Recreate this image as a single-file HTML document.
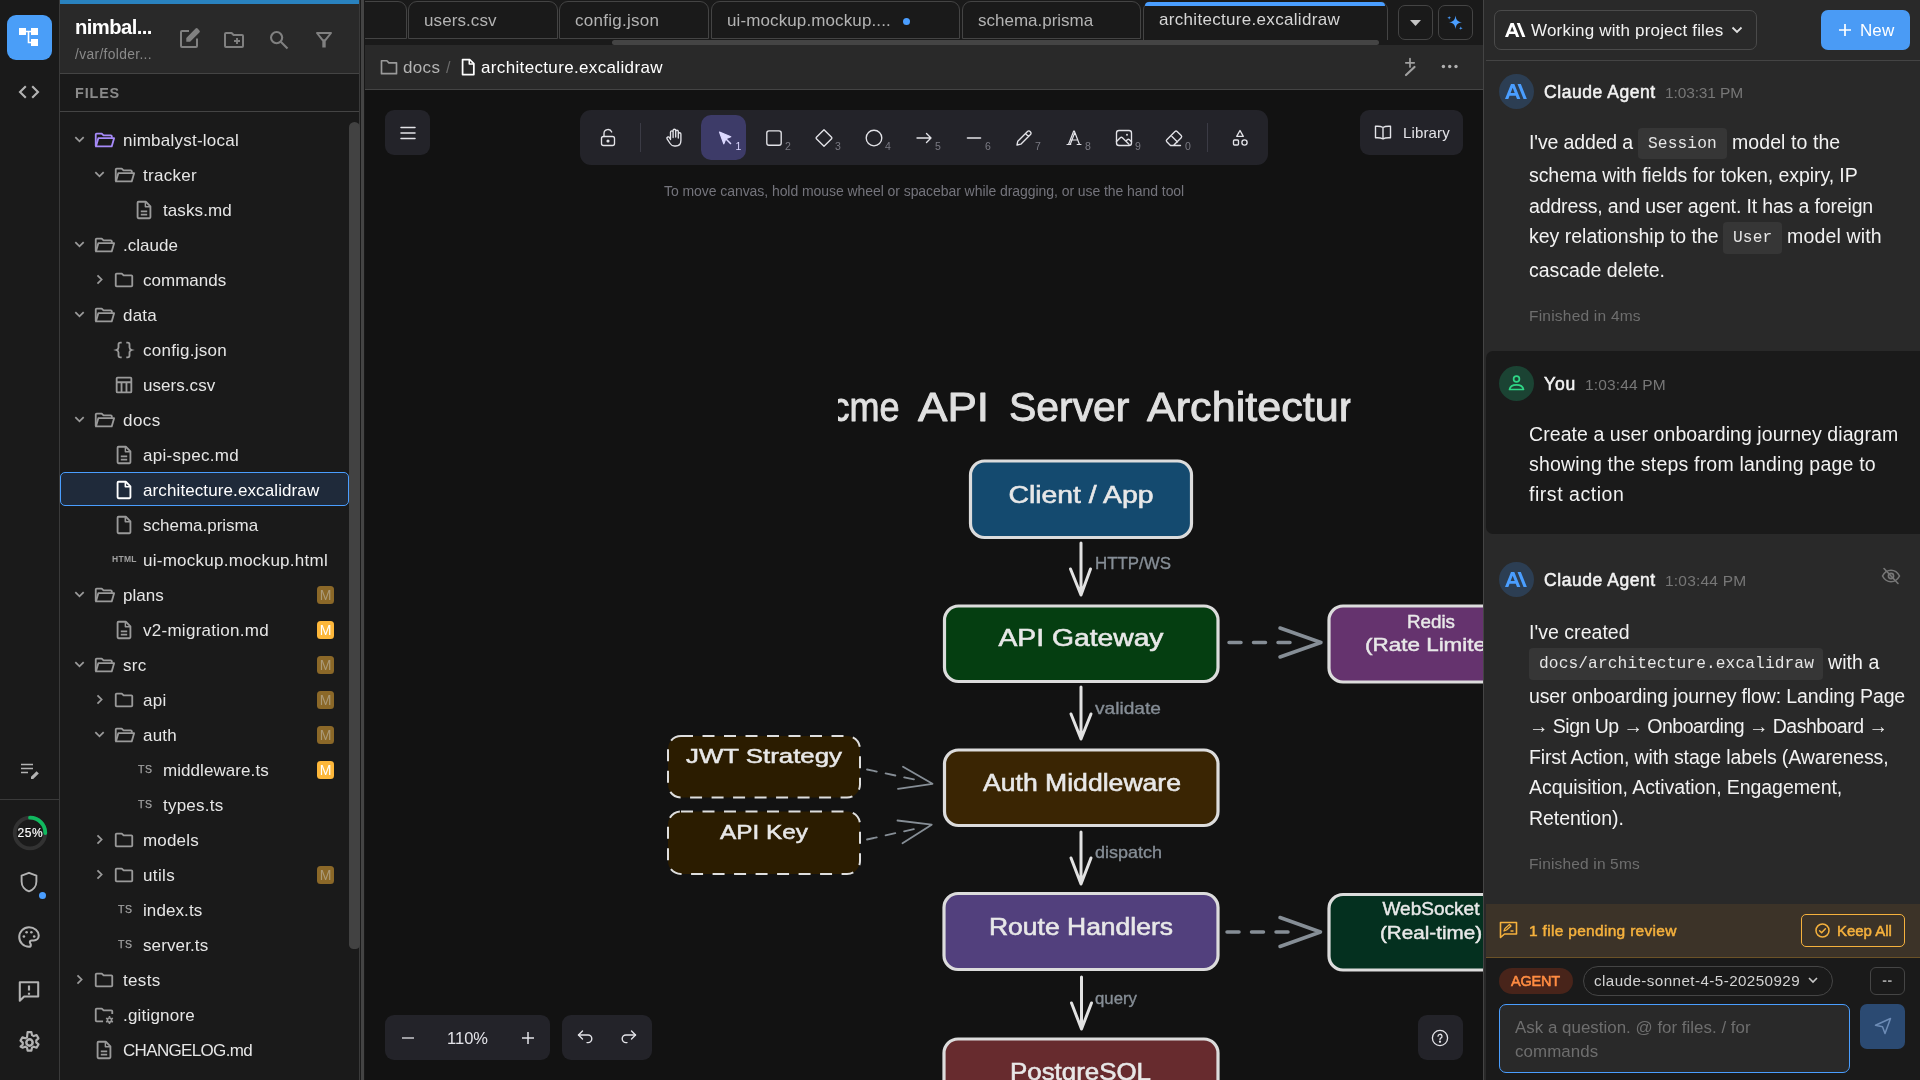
<!DOCTYPE html>
<html lang="en">
<head>
<meta charset="utf-8">
<title>architecture.excalidraw - Nimbalyst</title>
<style>
*{box-sizing:border-box;margin:0;padding:0}
html,body{width:1920px;height:1080px;overflow:hidden;background:#1a1a1a;color:#fff;
  font-family:"Liberation Sans","Noto Sans CJK SC",sans-serif;-webkit-font-smoothing:antialiased}
.abs{position:absolute}
#rail,#side,#ed,#rp{will-change:transform}
svg{display:block;overflow:visible}
.t{position:absolute;white-space:nowrap;line-height:1}
/* rail */
#rail{position:absolute;left:0;top:0;width:60px;height:1080px;background:#1a1a1a;border-right:1px solid #3a3a3a}
#logo{position:absolute;left:7px;top:15px;width:45px;height:45px;border-radius:9px;background:#4a9ef8}
.ri{position:absolute;left:17px;width:24px;height:24px;color:#b3b3b3}
/* sidebar */
#side{position:absolute;left:60px;top:0;width:299px;height:1080px;background:#1a1a1a}
#sideborder{position:absolute;left:359px;top:0;width:1px;height:1080px;background:#3a3a3a}
#handle{position:absolute;left:361px;top:0;width:3px;height:1080px;background:#444}#hgap{position:absolute;left:364px;top:0;width:1px;height:1080px;background:#181818}
#bluebar{position:absolute;left:0;top:0;width:299px;height:4px;background:#2982bf}
#shead{position:absolute;left:0;top:4px;width:299px;height:70px;background:#292929;border-bottom:1px solid #444}
#sfiles{position:absolute;left:0;top:74px;width:299px;height:38px;border-bottom:1px solid #444}
.row{position:absolute;left:1px;width:288px;height:35px}
.row.sel{background:#1f2a3a;border:1px solid #4a9eff;border-radius:5px;height:34px;left:0;width:289px}
.row .nm{position:absolute;top:10px;font-size:17px;letter-spacing:.28px;color:#e6e6e6;white-space:nowrap;line-height:18px}
.row svg.ic{position:absolute;top:6.5px;width:22px;height:22px;color:#9a9a9a}
.row svg.ch{position:absolute;top:11px;width:13px;height:13px;color:#9a9a9a}
.row .tx{position:absolute;top:12px;font-size:10.500px;font-weight:400;color:#a0a0a0;letter-spacing:.6px;line-height:11px;-webkit-text-stroke:.25px #a0a0a0}
.mb{position:absolute;left:256px;top:9px;width:17px;height:18px;border-radius:3.5px;background:#fdb73a;color:#fff;font-size:14px;font-weight:400;text-align:center;line-height:18px}
.mb.dim{background:#8b6828;color:#ab9a78}
#sthumb{position:absolute;left:349px;top:122px;width:11px;height:827px;border-radius:6px 6px 5px 5px;background:#424242}
/* editor */
#ed{position:absolute;left:365px;top:0;width:1118px;height:1080px;background:#121212;overflow:hidden}
#tabs{position:absolute;left:0;top:0;width:1118px;height:45px;background:#1a1a1a}
.tab{position:absolute;top:1px;height:38px;border:1px solid #444;border-radius:9px 9px 0 0;background:#1a1a1a}
.tab span{position:absolute;left:15px;top:10px;font-size:17px;letter-spacing:.3px;color:#b3b3b3;white-space:nowrap;line-height:18px}
.tab.act{border-bottom:none;height:39px;border-top:none}
.tab.act:before{content:"";position:absolute;left:1px;right:2px;top:.5px;height:4px;border-radius:4px 4px 0 0;background:#4a9eff}
.tab.act span{color:#d6d6d6;top:10px}
.tbtn{position:absolute;top:5px;width:35px;height:35px;border:1px solid #444;border-radius:7px}
#tscroll{position:absolute;left:247px;top:40px;width:767px;height:5px;border-radius:3px;background:#444}
#crumb{position:absolute;left:0;top:45px;width:1118px;height:45px;z-index:2;background:#292929;border-bottom:1px solid #444}
#canvas{position:absolute;left:0;top:89px;width:1118px;height:991px;background:#121212}
.isl{position:absolute;background:#232329;border-radius:9px}
/* right */
#edborder{position:absolute;left:1483px;top:0;width:1px;height:1080px;background:#444}
#rp{position:absolute;left:1484px;top:0;width:436px;height:1080px;background:#292929;overflow:hidden}
.msgtx{position:absolute;left:45px;font-size:19.5px;letter-spacing:.2px;color:#f2f2f2;white-space:nowrap;line-height:22px}
.code{font-family:"Liberation Mono","DejaVu Sans Mono",monospace;background:#363636;border-radius:4px;color:#e6e6e6}
</style>
<style>#hd1{letter-spacing:0.18px !important}#hd2{letter-spacing:0.092px !important}#n1{letter-spacing:0.555px !important}#t1{letter-spacing:-0.12px !important}#a1{letter-spacing:-0.132px !important}#c1{letter-spacing:0.117px !important}#a1b{letter-spacing:0.079px !important}#a2{letter-spacing:-0.066px !important}#a3{letter-spacing:-0.149px !important}#a4{letter-spacing:-0.0px !important}#c2{letter-spacing:0.114px !important}#a4b{letter-spacing:0.165px !important}#a5{letter-spacing:-0.051px !important}#f1{letter-spacing:0.218px !important}#n2{letter-spacing:0.834px !important}#t2{letter-spacing:0.147px !important}#u1{letter-spacing:0.072px !important}#u2{letter-spacing:0.197px !important}#u3{letter-spacing:0.539px !important}#n3{letter-spacing:0.555px !important}#t3{letter-spacing:0.213px !important}#b1{letter-spacing:0.036px !important}#c3{letter-spacing:0.107px !important}#b2{letter-spacing:0.089px !important}#b3{letter-spacing:-0.132px !important}#b4{letter-spacing:-0.523px !important}#b5{letter-spacing:-0.126px !important}#b6{letter-spacing:-0.064px !important}#b7{letter-spacing:-0.059px !important}#f2{letter-spacing:0.154px !important}#p1{letter-spacing:0.309px !important}#p2{letter-spacing:-0.035px !important}#ag{letter-spacing:-0.188px !important}#md{letter-spacing:0.425px !important}#ph1{letter-spacing:0.02px !important}#ph2{letter-spacing:0.084px !important}#r0{letter-spacing:0.233px !important}#r1{letter-spacing:0.289px !important}#r2{letter-spacing:0.096px !important}#r3{letter-spacing:0.02px !important}#r4{letter-spacing:0.008px !important}#r5{letter-spacing:0.202px !important}#r6{letter-spacing:0.242px !important}#r7{letter-spacing:0.05px !important}#r8{letter-spacing:0.426px !important}#r9{letter-spacing:0.309px !important}#r10{letter-spacing:0.106px !important}#r11{letter-spacing:-0.005px !important}#r12{letter-spacing:0.259px !important}#r13{letter-spacing:0.015px !important}#r14{letter-spacing:0.273px !important}#r15{letter-spacing:0.264px !important}#r16{letter-spacing:0.256px !important}#r17{letter-spacing:0.202px !important}#r18{letter-spacing:0.069px !important}#r19{letter-spacing:0.229px !important}#r20{letter-spacing:0.178px !important}#r21{letter-spacing:0.366px !important}#r22{letter-spacing:0.087px !important}#r23{letter-spacing:0.119px !important}#r24{letter-spacing:0.323px !important}#r25{letter-spacing:0.196px !important}#r26{letter-spacing:-0.662px !important}#tab0{letter-spacing:0.088px !important}#tab1{letter-spacing:0.272px !important}#tab2{letter-spacing:0.112px !important}#tab3{letter-spacing:-0.005px !important}#tab4{letter-spacing:0.311px !important}#bc1{letter-spacing:0.343px !important}#bc2{letter-spacing:0.347px !important}#hint{letter-spacing:-0.064px !important}</style>
</head>
<body>
<div id="rail">
  <div id="logo">
    <svg width="45" height="45" viewBox="0 0 45 45">
      <rect x="12" y="13" width="7" height="7" fill="#fff"/>
      <rect x="24" y="13" width="7" height="7" fill="#fff"/>
      <rect x="24" y="24" width="7" height="7" fill="#fff"/>
      <path d="M19 16.5h5M21.5 16.5v11h3" fill="none" stroke="#fff" stroke-width="1.6"/>
    </svg>
  </div>
  <svg class="ri" style="top:80px" viewBox="0 0 24 24" fill="none" stroke="currentColor" stroke-width="2.1"><path d="M8.8 6.2 3 12l5.8 5.8M15.2 6.2 21 12l-5.8 5.8"/></svg>
  <svg class="ri" style="top:758px" viewBox="0 0 24 24" fill="none" stroke="currentColor" stroke-width="1.7"><path d="M4 6.5h12M4 10.5h12M4 14.5h7"/><path d="M14 21v-2.2l5.6-5.6 2.2 2.2L16.2 21z" fill="currentColor" stroke="none"/></svg>
  <div class="abs" style="left:0;top:799px;width:59px;height:1px;background:#3a3a3a"></div>
  <svg class="abs" style="left:13px;top:816px" width="34" height="34" viewBox="0 0 34 34" fill="none">
    <circle cx="17" cy="17" r="15.300" stroke="#323232" stroke-width="3.800"/>
    <path d="M17 1.700A15.300 15.300 0 0 1 32.300 17" stroke="#10b95f" stroke-width="3.800" stroke-linecap="round"/>
    <text x="17.3" y="21" text-anchor="middle" font-size="12" font-weight="400" letter-spacing=".55" fill="#fff" stroke="#fff" stroke-width=".15" font-family="Liberation Sans, sans-serif">25%</text>
  </svg>
  <svg class="ri" style="top:870px" viewBox="0 0 24 24" fill="none" stroke="currentColor" stroke-width="1.9" stroke-linejoin="round"><path d="M12 2.8 4.6 5.6v6c0 4.6 3.1 8.4 7.4 9.7 4.3-1.300 7.400-5.100 7.400-9.700v-6z"/></svg>
  <div class="abs" style="left:39px;top:892px;width:7px;height:7px;border-radius:50%;background:#4a9eff"></div>
  <svg class="ri" style="top:924px;left:16px;width:26px;height:26px" viewBox="0 0 24 24" fill="none" stroke="currentColor" stroke-width="1.9"><path d="M12 3a9 9 0 1 0 0 18c1 0 1.700-.800 1.700-1.700 0-.500-.200-.900-.400-1.200-.300-.300-.500-.700-.500-1.200 0-.900.800-1.700 1.700-1.700h2a4.500 4.500 0 0 0 4.500-4.500C21 6.600 17 3 12 3z"/><circle cx="7.300" cy="11.500" r="1.200" fill="currentColor" stroke="none"/><circle cx="9.800" cy="7.600" r="1.200" fill="currentColor" stroke="none"/><circle cx="14.200" cy="7.600" r="1.200" fill="currentColor" stroke="none"/><circle cx="16.800" cy="11.500" r="1.200" fill="currentColor" stroke="none"/></svg>
  <svg class="ri" style="top:978px;left:16px;width:26px;height:26px" viewBox="0 0 24 24" fill="none" stroke="currentColor" stroke-width="1.9" stroke-linejoin="round"><path d="M3.500 4h17v13h-13l-4 4z"/><path d="M12 7v4.500M12 13.600v1.800" stroke-width="2"/></svg>
  <svg class="ri" style="top:1029px;left:15.500px;width:27px;height:27px" viewBox="0 0 24 24" fill="none" stroke="currentColor" stroke-width="1.9" stroke-linejoin="round"><path d="M10.300 2.800h3.400l.5 2.600 1.600.9 2.500-.9 1.700 2.900-2 1.800v1.800l2 1.800-1.700 2.900-2.500-.9-1.600.9-.5 2.600h-3.400l-.5-2.600-1.600-.9-2.500.9L4 15.700l2-1.800v-1.800L4 10.300l1.700-2.900 2.500.9 1.600-.9z"/><circle cx="12" cy="12" r="2.800" stroke-width="2.200"/></svg>
</div>
<div id="side">
  <div id="bluebar"></div>
  <div id="shead">
    <div class="t" style="left:15px;top:12px;font-size:20.2px;font-weight:700;letter-spacing:-.55px;line-height:22px">nimbal...</div>
    <div class="t" style="left:15px;top:42.5px;font-size:13.8px;color:#8a8a8a;letter-spacing:.35px;line-height:15px">/var/folder...</div>
    <svg class="abs" style="left:117px;top:23px;color:#808080" width="24" height="24" viewBox="0 0 24 24" fill="none" stroke="currentColor" stroke-width="2" stroke-linejoin="round"><path d="M12 4H5a1 1 0 0 0-1 1v14a1 1 0 0 0 1 1h14a1 1 0 0 0 1-1v-7.500"/><path d="M9.300 14.700v-3.800l9.300-9.300a1.400 1.400 0 0 1 2 0l1.800 1.800a1.400 1.400 0 0 1 0 2l-9.300 9.300z" fill="currentColor" stroke="none"/></svg>
    <svg class="abs" style="left:162px;top:23.500px;color:#808080" width="24" height="24" viewBox="0 0 24 24" fill="none" stroke="currentColor" stroke-width="2" stroke-linejoin="round"><path d="M4 5h5.600l2 2H20a1 1 0 0 1 1 1v10a1 1 0 0 1-1 1H4a1 1 0 0 1-1-1V6a1 1 0 0 1 1-1z"/><path d="M15 10v6M12 13h6" stroke-width="1.900"/></svg>
    <svg class="abs" style="left:207px;top:23.500px;color:#808080" width="24" height="24" viewBox="0 0 24 24" fill="none" stroke="currentColor" stroke-width="2.100"><circle cx="9.600" cy="9.600" r="5.600"/><path d="m13.800 13.800 6.700 6.700"/></svg>
    <svg class="abs" style="left:252px;top:23.500px;color:#808080" width="24" height="24" viewBox="0 0 24 24" fill="none" stroke="currentColor" stroke-width="2" stroke-linejoin="round"><path d="M5 5h14l-5.600 7.200h-2.800z"/><path d="M12 12v7.500" stroke-width="3.400" stroke-linejoin="miter"/></svg>
  </div>
  <div id="sfiles"><div class="t" style="left:15px;top:12px;font-size:14.4px;font-weight:700;color:#8a8a8a;letter-spacing:.85px;line-height:15px">FILES</div></div>
<div class="row" style="top:122px"><svg class="ch" style="left:12px" viewBox="0 0 14 14" fill="none" stroke="currentColor" stroke-width="1.900"><path d="M2.500 4.500 7 9l4.500-4.500"/></svg><svg class="ic" color="#a78bfa" style="color:#a78bfa;left:32px" viewBox="0 0 24 24" fill="none" stroke="currentColor" stroke-width="2" stroke-linejoin="round"><path d="M20.500 9.500V8a1 1 0 0 0-1-1H11.500L9.500 5H4a1 1 0 0 0-1 1v12.500"/><path d="M3.200 19 5.800 10H23l-2.600 9z"/></svg><span class="nm" id="r0" style="left:62px;">nimbalyst-local</span></div>
<div class="row" style="top:157px"><svg class="ch" style="left:32px" viewBox="0 0 14 14" fill="none" stroke="currentColor" stroke-width="1.900"><path d="M2.500 4.500 7 9l4.500-4.500"/></svg><svg class="ic" style="left:52px" viewBox="0 0 24 24" fill="none" stroke="currentColor" stroke-width="2" stroke-linejoin="round"><path d="M20.500 9.500V8a1 1 0 0 0-1-1H11.500L9.500 5H4a1 1 0 0 0-1 1v12.500"/><path d="M3.200 19 5.800 10H23l-2.600 9z"/></svg><span class="nm" id="r1" style="left:82px;">tracker</span></div>
<div class="row" style="top:192px"><svg class="ic" style="left:72px" viewBox="0 0 24 24" fill="none" stroke="currentColor" stroke-width="2" stroke-linejoin="round"><path d="M6 3h8l5 5v12a1 1 0 0 1-1 1H6a1 1 0 0 1-1-1V4a1 1 0 0 1 1-1z"/><path d="M13.500 3.500V8.500H18.500" stroke-width="1.600"/><path d="M8.500 13.500h7M8.500 17h7" stroke-width="1.900"/></svg><span class="nm" id="r2" style="left:102px;">tasks.md</span></div>
<div class="row" style="top:227px"><svg class="ch" style="left:12px" viewBox="0 0 14 14" fill="none" stroke="currentColor" stroke-width="1.900"><path d="M2.500 4.500 7 9l4.500-4.500"/></svg><svg class="ic" style="left:32px" viewBox="0 0 24 24" fill="none" stroke="currentColor" stroke-width="2" stroke-linejoin="round"><path d="M20.500 9.500V8a1 1 0 0 0-1-1H11.500L9.500 5H4a1 1 0 0 0-1 1v12.500"/><path d="M3.200 19 5.800 10H23l-2.600 9z"/></svg><span class="nm" id="r3" style="left:62px;">.claude</span></div>
<div class="row" style="top:262px"><svg class="ch" style="left:32px" viewBox="0 0 14 14" fill="none" stroke="currentColor" stroke-width="1.900"><path d="M4.800 2.500 9.300 7l-4.500 4.500"/></svg><svg class="ic" style="left:52px" viewBox="0 0 24 24" fill="none" stroke="currentColor" stroke-width="2" stroke-linejoin="round"><path d="M4 5h5.600l2 2H20a1 1 0 0 1 1 1v10a1 1 0 0 1-1 1H4a1 1 0 0 1-1-1V6a1 1 0 0 1 1-1z"/></svg><span class="nm" id="r4" style="left:82px;">commands</span></div>
<div class="row" style="top:297px"><svg class="ch" style="left:12px" viewBox="0 0 14 14" fill="none" stroke="currentColor" stroke-width="1.900"><path d="M2.500 4.500 7 9l4.500-4.500"/></svg><svg class="ic" style="left:32px" viewBox="0 0 24 24" fill="none" stroke="currentColor" stroke-width="2" stroke-linejoin="round"><path d="M20.500 9.500V8a1 1 0 0 0-1-1H11.500L9.500 5H4a1 1 0 0 0-1 1v12.500"/><path d="M3.200 19 5.800 10H23l-2.600 9z"/></svg><span class="nm" id="r5" style="left:62px;">data</span></div>
<div class="row" style="top:332px"><svg class="ic" style="left:52px" viewBox="0 0 24 24" fill="none" stroke="currentColor" stroke-width="2"><path d="M9.500 4H8C6.700 4 6 4.800 6 6v3.200c0 1.400-.900 2.300-2.500 2.800C5.100 12.500 6 13.400 6 14.800V18c0 1.200.7 2 2 2h1.500M14.500 4H16c1.300 0 2 .8 2 2v3.200c0 1.400.9 2.300 2.500 2.800-1.600.500-2.500 1.400-2.500 2.800V18c0 1.200-.700 2-2 2h-1.500"/></svg><span class="nm" id="r6" style="left:82px;">config.json</span></div>
<div class="row" style="top:367px"><svg class="ic" style="left:52px" viewBox="0 0 24 24" fill="none" stroke="currentColor" stroke-width="2" stroke-linejoin="round"><path d="M5 4h14a1 1 0 0 1 1 1v14a1 1 0 0 1-1 1H5a1 1 0 0 1-1-1V5a1 1 0 0 1 1-1z"/><path d="M4 9h16M9.300 9v11M14.700 9v11"/></svg><span class="nm" id="r7" style="left:82px;">users.csv</span></div>
<div class="row" style="top:402px"><svg class="ch" style="left:12px" viewBox="0 0 14 14" fill="none" stroke="currentColor" stroke-width="1.900"><path d="M2.500 4.500 7 9l4.500-4.500"/></svg><svg class="ic" style="left:32px" viewBox="0 0 24 24" fill="none" stroke="currentColor" stroke-width="2" stroke-linejoin="round"><path d="M20.500 9.500V8a1 1 0 0 0-1-1H11.500L9.500 5H4a1 1 0 0 0-1 1v12.500"/><path d="M3.200 19 5.800 10H23l-2.600 9z"/></svg><span class="nm" id="r8" style="left:62px;">docs</span></div>
<div class="row" style="top:437px"><svg class="ic" style="left:52px" viewBox="0 0 24 24" fill="none" stroke="currentColor" stroke-width="2" stroke-linejoin="round"><path d="M6 3h8l5 5v12a1 1 0 0 1-1 1H6a1 1 0 0 1-1-1V4a1 1 0 0 1 1-1z"/><path d="M13.500 3.500V8.500H18.500" stroke-width="1.600"/><path d="M8.500 13.500h7M8.500 17h7" stroke-width="1.900"/></svg><span class="nm" id="r9" style="left:82px;">api-spec.md</span></div>
<div class="row sel" style="top:472px"><svg class="ic" style="color:#fff;margin-top:-1px;left:52px" viewBox="0 0 24 24" fill="none" stroke="currentColor" stroke-width="2" stroke-linejoin="round"><path d="M6 3h8l5 5v12a1 1 0 0 1-1 1H6a1 1 0 0 1-1-1V4a1 1 0 0 1 1-1z"/><path d="M13.500 3.500V8.500H18.500" stroke-width="1.800"/></svg><span class="nm" id="r10" style="left:82px;margin-top:-1px;color:#fff;">architecture.excalidraw</span></div>
<div class="row" style="top:507px"><svg class="ic" style="left:52px" viewBox="0 0 24 24" fill="none" stroke="currentColor" stroke-width="2" stroke-linejoin="round"><path d="M6 3h8l5 5v12a1 1 0 0 1-1 1H6a1 1 0 0 1-1-1V4a1 1 0 0 1 1-1z"/><path d="M13.500 3.500V8.500H18.500" stroke-width="1.800"/></svg><span class="nm" id="r11" style="left:82px;">schema.prisma</span></div>
<div class="row" style="top:542px"><span class="tx" style="left:51px;font-size:8.500px;letter-spacing:.3px;font-weight:700;-webkit-text-stroke:0">HTML</span><span class="nm" id="r12" style="left:82px;">ui-mockup.mockup.html</span></div>
<div class="row" style="top:577px"><svg class="ch" style="left:12px" viewBox="0 0 14 14" fill="none" stroke="currentColor" stroke-width="1.900"><path d="M2.500 4.500 7 9l4.500-4.500"/></svg><svg class="ic" style="left:32px" viewBox="0 0 24 24" fill="none" stroke="currentColor" stroke-width="2" stroke-linejoin="round"><path d="M20.500 9.500V8a1 1 0 0 0-1-1H11.500L9.500 5H4a1 1 0 0 0-1 1v12.500"/><path d="M3.200 19 5.800 10H23l-2.600 9z"/></svg><span class="nm" id="r13" style="left:62px;">plans</span><span class="mb dim">M</span></div>
<div class="row" style="top:612px"><svg class="ic" style="left:52px" viewBox="0 0 24 24" fill="none" stroke="currentColor" stroke-width="2" stroke-linejoin="round"><path d="M6 3h8l5 5v12a1 1 0 0 1-1 1H6a1 1 0 0 1-1-1V4a1 1 0 0 1 1-1z"/><path d="M13.500 3.500V8.500H18.500" stroke-width="1.600"/><path d="M8.500 13.500h7M8.500 17h7" stroke-width="1.900"/></svg><span class="nm" id="r14" style="left:82px;">v2-migration.md</span><span class="mb">M</span></div>
<div class="row" style="top:647px"><svg class="ch" style="left:12px" viewBox="0 0 14 14" fill="none" stroke="currentColor" stroke-width="1.900"><path d="M2.500 4.500 7 9l4.500-4.500"/></svg><svg class="ic" style="left:32px" viewBox="0 0 24 24" fill="none" stroke="currentColor" stroke-width="2" stroke-linejoin="round"><path d="M20.500 9.500V8a1 1 0 0 0-1-1H11.500L9.500 5H4a1 1 0 0 0-1 1v12.500"/><path d="M3.200 19 5.800 10H23l-2.600 9z"/></svg><span class="nm" id="r15" style="left:62px;">src</span><span class="mb dim">M</span></div>
<div class="row" style="top:682px"><svg class="ch" style="left:32px" viewBox="0 0 14 14" fill="none" stroke="currentColor" stroke-width="1.900"><path d="M4.800 2.500 9.300 7l-4.500 4.500"/></svg><svg class="ic" style="left:52px" viewBox="0 0 24 24" fill="none" stroke="currentColor" stroke-width="2" stroke-linejoin="round"><path d="M4 5h5.600l2 2H20a1 1 0 0 1 1 1v10a1 1 0 0 1-1 1H4a1 1 0 0 1-1-1V6a1 1 0 0 1 1-1z"/></svg><span class="nm" id="r16" style="left:82px;">api</span><span class="mb dim">M</span></div>
<div class="row" style="top:717px"><svg class="ch" style="left:32px" viewBox="0 0 14 14" fill="none" stroke="currentColor" stroke-width="1.900"><path d="M2.500 4.500 7 9l4.500-4.500"/></svg><svg class="ic" style="left:52px" viewBox="0 0 24 24" fill="none" stroke="currentColor" stroke-width="2" stroke-linejoin="round"><path d="M20.500 9.500V8a1 1 0 0 0-1-1H11.500L9.500 5H4a1 1 0 0 0-1 1v12.500"/><path d="M3.200 19 5.800 10H23l-2.600 9z"/></svg><span class="nm" id="r17" style="left:82px;">auth</span><span class="mb dim">M</span></div>
<div class="row" style="top:752px"><span class="tx" style="left:77px">TS</span><span class="nm" id="r18" style="left:102px;">middleware.ts</span><span class="mb">M</span></div>
<div class="row" style="top:787px"><span class="tx" style="left:77px">TS</span><span class="nm" id="r19" style="left:102px;">types.ts</span></div>
<div class="row" style="top:822px"><svg class="ch" style="left:32px" viewBox="0 0 14 14" fill="none" stroke="currentColor" stroke-width="1.900"><path d="M4.800 2.500 9.300 7l-4.500 4.500"/></svg><svg class="ic" style="left:52px" viewBox="0 0 24 24" fill="none" stroke="currentColor" stroke-width="2" stroke-linejoin="round"><path d="M4 5h5.600l2 2H20a1 1 0 0 1 1 1v10a1 1 0 0 1-1 1H4a1 1 0 0 1-1-1V6a1 1 0 0 1 1-1z"/></svg><span class="nm" id="r20" style="left:82px;">models</span></div>
<div class="row" style="top:857px"><svg class="ch" style="left:32px" viewBox="0 0 14 14" fill="none" stroke="currentColor" stroke-width="1.900"><path d="M4.800 2.500 9.300 7l-4.500 4.500"/></svg><svg class="ic" style="left:52px" viewBox="0 0 24 24" fill="none" stroke="currentColor" stroke-width="2" stroke-linejoin="round"><path d="M4 5h5.600l2 2H20a1 1 0 0 1 1 1v10a1 1 0 0 1-1 1H4a1 1 0 0 1-1-1V6a1 1 0 0 1 1-1z"/></svg><span class="nm" id="r21" style="left:82px;">utils</span><span class="mb dim">M</span></div>
<div class="row" style="top:892px"><span class="tx" style="left:57px">TS</span><span class="nm" id="r22" style="left:82px;">index.ts</span></div>
<div class="row" style="top:927px"><span class="tx" style="left:57px">TS</span><span class="nm" id="r23" style="left:82px;">server.ts</span></div>
<div class="row" style="top:962px"><svg class="ch" style="left:12px" viewBox="0 0 14 14" fill="none" stroke="currentColor" stroke-width="1.900"><path d="M4.800 2.500 9.300 7l-4.500 4.500"/></svg><svg class="ic" style="left:32px" viewBox="0 0 24 24" fill="none" stroke="currentColor" stroke-width="2" stroke-linejoin="round"><path d="M4 5h5.600l2 2H20a1 1 0 0 1 1 1v10a1 1 0 0 1-1 1H4a1 1 0 0 1-1-1V6a1 1 0 0 1 1-1z"/></svg><span class="nm" id="r24" style="left:62px;">tests</span></div>
<div class="row" style="top:997px"><svg class="ic" style="left:32px" viewBox="0 0 24 24" fill="none" stroke="currentColor" stroke-width="2" stroke-linejoin="round"><path d="M11 19H4a1 1 0 0 1-1-1V6a1 1 0 0 1 1-1h5.600l2 2H20a1 1 0 0 1 1 1v3"/><circle cx="18" cy="17.500" r="2.200" stroke-width="1.800"/><path d="M18 13.200v1.600M18 20.200v1.600M14.300 15.400l1.400.8M20.300 18.800l1.400.8M14.300 19.600l1.400-.8M20.300 16.200l1.400-.8" stroke-width="1.700"/></svg><span class="nm" id="r25" style="left:62px;">.gitignore</span></div>
<div class="row" style="top:1032px"><svg class="ic" style="left:32px" viewBox="0 0 24 24" fill="none" stroke="currentColor" stroke-width="2" stroke-linejoin="round"><path d="M6 3h8l5 5v12a1 1 0 0 1-1 1H6a1 1 0 0 1-1-1V4a1 1 0 0 1 1-1z"/><path d="M13.500 3.500V8.500H18.500" stroke-width="1.600"/><path d="M8.500 13.500h7M8.500 17h7" stroke-width="1.900"/></svg><span class="nm" id="r26" style="left:62px;">CHANGELOG.md</span></div>
</div>
<div id="sideborder"></div><div id="sthumb"></div><div id="handle"></div><div id="hgap"></div>
<div id="ed">
  <div id="tabs">
    <div class="tab" style="left:-60px;width:102px"></div>
    <div class="tab" style="left:43px;width:150px"><span id="tab0">users.csv</span></div>
    <div class="tab" style="left:194px;width:150px"><span id="tab1">config.json</span></div>
    <div class="tab" style="left:346px;width:249px"><span id="tab2">ui-mockup.mockup....</span><i class="abs" style="left:191px;top:16px;width:7px;height:7px;border-radius:50%;background:#4a9eff"></i></div>
    <div class="tab" style="left:597px;width:179px"><span id="tab3">schema.prisma</span></div>
    <div class="tab act" style="left:778px;width:245px;top:1px"><span id="tab4">architecture.excalidraw</span></div>
    <div class="tbtn" style="left:1033px"><svg class="abs" style="left:11px;top:14px" width="11" height="6" viewBox="0 0 11 6"><path d="M0 0h11L5.500 6z" fill="#c4c4c4"/></svg></div>
    <div class="tbtn" style="left:1073px"><svg class="abs" style="left:4.500px;top:6px" width="22" height="22" viewBox="0 0 22 22" fill="#4a9eff"><path d="M11.500 3.500c.6 4.600 2.100 6.200 6.500 6.800-4.400.600-5.900 2.200-6.500 6.800-.600-4.600-2.100-6.200-6.500-6.800 4.400-.600 5.900-2.200 6.500-6.800z"/><path d="M5.200 3.800c.2 1.400.6 1.800 2 2-1.400.2-1.800.600-2 2-.200-1.400-.600-1.800-2-2 1.400-.200 1.800-.600 2-2zM16.800 14.200c.2 1.400.6 1.800 2 2-1.400.2-1.800.600-2 2-.200-1.400-.600-1.800-2-2 1.400-.200 1.800-.600 2-2z"/></svg></div>
    <div id="tscroll"></div>
  </div>
  <div id="crumb">
    <svg class="abs" style="left:14px;top:12px;color:#9a9a9a" width="20" height="20" viewBox="0 0 24 24" fill="none" stroke="currentColor" stroke-width="2" stroke-linejoin="round"><path d="M3 4.500h6.500l2.300 2.500H21V20H3z"/></svg>
    <div class="t" style="left:38px;top:13px;font-size:17px;color:#b3b3b3;letter-spacing:.3px;line-height:19px" id="bc1">docs</div>
    <div class="t" style="left:81px;top:13px;font-size:16px;color:#6a6a6a;line-height:19px">/</div>
    <svg class="abs" style="left:93px;top:12px;color:#fff" width="20" height="20" viewBox="0 0 24 24" fill="none" stroke="currentColor" stroke-width="2.100" stroke-linejoin="round"><path d="M5.500 3H14l5 5v13H5.500z"/><path d="M13.500 3.500v5h5" stroke-width="1.800"/></svg>
    <div class="t" style="left:116px;top:13px;font-size:17px;color:#fff;letter-spacing:.42px;line-height:19px" id="bc2">architecture.excalidraw</div>
    <svg class="abs" style="left:1035px;top:11px;color:#a0a0a0" width="22" height="22" viewBox="0 0 22 22" fill="none" stroke="currentColor" stroke-width="1.700" stroke-linecap="round"><path d="M10 2.500v8.500M5.800 6.800h8.400"/><path d="M6 19l8.500-8" stroke-width="2.200"/></svg>
    <svg class="abs" style="left:1076px;top:19px" width="18" height="5" viewBox="0 0 18 5" fill="#b0b0b0"><circle cx="2.400" cy="2.500" r="1.700"/><circle cx="8.700" cy="2.500" r="1.700"/><circle cx="15" cy="2.500" r="1.700"/></svg>
  </div>
  <div id="canvas">
    <svg class="abs" style="left:-365px;top:-89px" width="1920" height="1080" viewBox="0 0 1920 1080" font-family="Liberation Sans, sans-serif">
      <defs><clipPath id="tclip"><rect x="838" y="370" width="512.500" height="70"/></clipPath></defs>
      <g clip-path="url(#tclip)" font-size="41" fill="#e0e0e0" stroke="#e0e0e0" stroke-width=".9" stroke-linejoin="round"><text x="807.500" y="421" textLength="92" lengthAdjust="spacingAndGlyphs">Acme</text><text x="918" y="421" textLength="71" lengthAdjust="spacingAndGlyphs">API</text><text x="1009" y="421" textLength="120.500" lengthAdjust="spacingAndGlyphs">Server</text><text x="1147" y="421" textLength="230" lengthAdjust="spacingAndGlyphs">Architecture</text></g>
      <g fill="none" stroke="#dcdcdc" stroke-width="3.200" stroke-linejoin="round">
        <rect x="970.500" y="461" width="221" height="76.500" rx="14" fill="#144a6f"/>
        <rect x="944.500" y="606" width="273.500" height="75.500" rx="14" fill="#053e11"/>
        <rect x="944.500" y="750" width="273.500" height="75.500" rx="14" fill="#3a2503"/>
        <rect x="944" y="893.500" width="274" height="76" rx="14" fill="#52407d"/>
        <rect x="944" y="1039" width="274" height="76" rx="14" fill="#672b2e"/>
        <rect x="1329" y="606" width="210" height="76" rx="14" fill="#65336e"/>
        <rect x="1329" y="894.500" width="210" height="75.500" rx="14" fill="#04301f"/>
      </g>
      <g fill="#2b1c00" stroke="#dedede" stroke-width="2" stroke-dasharray="12 9.500">
        <rect x="668" y="736" width="192" height="61.500" rx="13"/>
        <rect x="668" y="811.500" width="192" height="62.500" rx="13"/>
      </g>
      <g fill="none" stroke="#e2e2e2" stroke-width="3" stroke-linecap="round" stroke-linejoin="round">
        <path d="M1081 543v51M1070.500 569l10.500 26 9.500-26"/>
        <path d="M1081 687v51M1071 714l10 25 10-25"/>
        <path d="M1081 832v51M1071 858l10 26 10-26"/>
        <path d="M1081.500 977v51M1071.500 1003l10 26 10-26"/>
      </g>
      <g fill="none" stroke="#868e96" stroke-width="3.500" stroke-linecap="round" stroke-linejoin="round">
        <path d="M1229 642.500h70" stroke-dasharray="12 12.500"/>
        <path d="M1280 628l41 14.500-41 14.500"/>
        <path d="M1227 932h70" stroke-dasharray="12 12.500"/>
        <path d="M1280 917.500l40.500 14.500-40.500 14.500"/>
      </g>
      <g fill="none" stroke="#868e96" stroke-width="1.800" stroke-linecap="round" stroke-linejoin="round">
        <path d="M867 769.500l52 11" stroke-dasharray="10 9"/>
        <path d="M903 766.700l29.500 17.100-34.500 5"/>
        <path d="M867 839.500l52-11.500" stroke-dasharray="10 9"/>
        <path d="M897.500 820.500l34.200 4.200-29.200 18.600"/>
      </g>
      <g fill="#e8e8e8" stroke="#e8e8e8" stroke-width=".55" font-size="23" text-anchor="middle">
        <text x="1081" y="503" textLength="145" lengthAdjust="spacingAndGlyphs">Client / App</text>
        <text x="1081" y="646" textLength="165" lengthAdjust="spacingAndGlyphs">API Gateway</text>
        <text x="1082" y="791" textLength="198" lengthAdjust="spacingAndGlyphs">Auth Middleware</text>
        <text x="1081" y="935" textLength="184" lengthAdjust="spacingAndGlyphs">Route Handlers</text>
        <text x="1080.500" y="1080" textLength="141" lengthAdjust="spacingAndGlyphs">PostgreSQL</text>
      </g>
      <g fill="#e8e8e8" stroke="#e8e8e8" stroke-width=".5" font-size="20.500" text-anchor="middle">
        <text x="764" y="763" textLength="156" lengthAdjust="spacingAndGlyphs">JWT Strategy</text>
        <text x="764" y="839" textLength="88" lengthAdjust="spacingAndGlyphs">API Key</text>
      </g>
      <g fill="#e8e8e8" stroke="#e8e8e8" stroke-width=".45" font-size="18.500" text-anchor="middle">
        <text x="1431" y="627.500" textLength="48" lengthAdjust="spacingAndGlyphs">Redis</text>
        <text x="1433" y="651" textLength="136" lengthAdjust="spacingAndGlyphs">(Rate Limiter)</text>
        <text x="1431" y="915" textLength="97" lengthAdjust="spacingAndGlyphs">WebSocket</text>
        <text x="1431" y="938.500" textLength="102" lengthAdjust="spacingAndGlyphs">(Real-time)</text>
      </g>
      <g fill="#868e96" stroke="#868e96" stroke-width=".35" font-size="17">
        <text x="1095" y="569" textLength="76" lengthAdjust="spacingAndGlyphs">HTTP/WS</text>
        <text x="1095" y="713.500" textLength="66" lengthAdjust="spacingAndGlyphs">validate</text>
        <text x="1095" y="857.500" textLength="67" lengthAdjust="spacingAndGlyphs">dispatch</text>
        <text x="1095" y="1003.500" textLength="42" lengthAdjust="spacingAndGlyphs">query</text>
      </g>
    </svg>
    <!-- excalidraw UI -->
    <div class="isl" style="left:20px;top:21px;width:45px;height:45px"><svg class="abs" style="left:15px;top:16px" width="16" height="14" viewBox="0 0 16 14" stroke="#e3e3e8" stroke-width="1.500" stroke-linecap="round"><path d="M1 1.500h14M1 7h14M1 12.500h14"/></svg></div>
    <div class="isl" style="left:215px;top:21px;width:688px;height:55px;border-radius:11px" id="tb">
      <div class="abs" style="left:121px;top:5px;width:45px;height:45px;border-radius:10px;background:#3d3b68"></div>
      <div class="abs" style="left:60px;top:13px;width:1px;height:29px;background:#3b3b45"></div>
      <div class="abs" style="left:627px;top:13px;width:1px;height:29px;background:#3b3b45"></div>
      <svg class="abs" style="left:0;top:0" width="688" height="55" viewBox="0 0 688 55" fill="none" stroke="#e3e3e8" stroke-width="1.350" stroke-linecap="round" stroke-linejoin="round" font-family="Liberation Sans, sans-serif">
        <!-- lock open (28,28) -->
        <rect x="21.500" y="26.500" width="13" height="9" rx="2"/><path d="M24 26.500v-3a4 4 0 0 1 7.700-1.500"/><circle cx="28" cy="31" r=".9" fill="#e3e3e8"/>
        <!-- hand (94,28) -->
        <path d="M90.500 29.500v-7.300a1.300 1.300 0 0 1 2.600 0v5.300M93.100 27v-6.500a1.300 1.300 0 0 1 2.600 0V27M95.700 27v-5.500a1.300 1.300 0 0 1 2.600 0V28M98.300 24a1.300 1.300 0 0 1 2.600 0v6.500c0 3.500-2 5.500-5.200 5.500h-1.200c-2 0-3.300-.8-4.400-2.500l-3-4.600a1.300 1.300 0 0 1 2.200-1.400l1.200 1.700"/>
        <!-- pointer (145,28) -->
        <path d="M139.500 22l4.300 11.800 2-5 5-2z" fill="#dcd8ff" stroke="#dcd8ff" stroke-width="1.200"/><path d="M146.500 29.500l4 4" stroke="#dcd8ff" stroke-width="1.600"/>
        <!-- rect (194,28) -->
        <rect x="186.800" y="20.800" width="14.400" height="14.400" rx="2.200"/>
        <!-- diamond (244,28) -->
        <path d="M244 19.800l7.600 7.500a1 1 0 0 1 0 1.400L244 36.200l-7.600-7.500a1 1 0 0 1 0-1.400z"/>
        <!-- circle (294,28) -->
        <circle cx="294" cy="28" r="7.800"/>
        <!-- arrow (344,28) -->
        <path d="M337 28h14M346.500 23.500l4.500 4.500-4.500 4.500"/>
        <!-- line (394,28) -->
        <path d="M387.500 28h13" stroke-width="1.600"/>
        <!-- pencil (444,28) -->
        <path d="M437 35l.8-3.800 9.700-9.700a1.800 1.800 0 0 1 2.600 0l.400.400a1.800 1.800 0 0 1 0 2.600l-9.700 9.700zM445.500 23.500l3 3"/>
        <!-- text A (494,28) -->
        <path d="M488.500 34.500l5.200-13.500h.6l5.200 13.500M490.500 30h7M487 34.500h3.800M497.200 34.500h3.800M490.200 34.500l4.600-12" stroke-width="1.200"/>
        <!-- image (544,28) -->
        <rect x="536.500" y="20.500" width="15" height="15" rx="2.500"/><path d="M536.500 31.500l3.800-3.800a1.500 1.500 0 0 1 2.100 0l6.600 6.600M546 31l1.300-1.300a1.500 1.500 0 0 1 2.100 0l2.100 2.100"/><circle cx="547" cy="24.800" r=".35" fill="#e3e3e8"/>
        <!-- eraser (594,28) -->
        <path d="M590.500 35.500l-3.700-3.700a1.500 1.500 0 0 1 0-2.100l8.200-8.200a1.500 1.500 0 0 1 2.100 0l4.100 4.100a1.500 1.500 0 0 1 0 2.100l-7.800 7.800zM590.500 35.500h10M592 26.500l5.500 5.500"/>
        <!-- shapes (660,28) -->
        <path d="M660 20.500l3.300 5.800h-6.600z"/><rect x="653.500" y="30" width="5" height="5" rx="1"/><circle cx="664.500" cy="32.500" r="2.600"/>
        <g fill="#7a7a83" stroke="none" font-size="10.500">
          <text x="155.500" y="40" fill="#dcd8ff">1</text><text x="205" y="40">2</text><text x="255" y="40">3</text><text x="305" y="40">4</text><text x="355" y="40">5</text><text x="405" y="40">6</text><text x="455" y="40">7</text><text x="505" y="40">8</text><text x="555" y="40">9</text><text x="605" y="40">0</text>
        </g>
      </svg>
    </div>
    <div class="t" style="left:299px;top:94px;font-size:14px;color:#74747c;line-height:16px" id="hint">To move canvas, hold mouse wheel or spacebar while dragging, or use the hand tool</div>
    <div class="isl" style="left:995px;top:21px;width:103px;height:45px">
      <svg class="abs" style="left:14px;top:14px" width="18" height="17" viewBox="0 0 18 17" fill="none" stroke="#e3e3e8" stroke-width="1.400" stroke-linejoin="round"><path d="M9 3.500C7.500 2.500 5 2 1.500 2.300v11.500c3.500-.300 6 .200 7.500 1.200 1.500-1 4-1.500 7.500-1.200V2.300C13 2 10.500 2.500 9 3.500zM9 3.500V15"/></svg>
      <div class="t" style="left:43px;top:14px;font-size:15px;color:#e3e3e8;letter-spacing:.15px;line-height:17px">Library</div>
    </div>
    <div class="isl" style="left:20px;top:926px;width:165px;height:45px">
      <svg class="abs" style="left:17px;top:22px" width="12" height="2" viewBox="0 0 12 2"><path d="M0 1h12" stroke="#c8c8cc" stroke-width="1.500"/></svg>
      <div class="t" style="left:0;width:165px;text-align:center;top:14px;font-size:16.500px;color:#e3e3e8;line-height:18px">110%</div>
      <svg class="abs" style="left:137px;top:17px" width="12" height="12" viewBox="0 0 12 12"><path d="M0 6h12M6 0v12" stroke="#e3e3e8" stroke-width="1.500"/></svg>
    </div>
    <div class="isl" style="left:197px;top:926px;width:90px;height:45px">
      <svg class="abs" style="left:15px;top:15px" width="16" height="14" viewBox="0 0 16 14" fill="none" stroke="#e3e3e8" stroke-width="1.400" stroke-linecap="round" stroke-linejoin="round"><path d="M5.500 1 1.500 5l4 4"/><path d="M1.500 5H11a3.800 3.800 0 0 1 0 7.600h-1"/></svg>
      <svg class="abs" style="left:59px;top:15px" width="16" height="14" viewBox="0 0 16 14" fill="none" stroke="#e3e3e8" stroke-width="1.400" stroke-linecap="round" stroke-linejoin="round"><path d="M10.500 1l4 4-4 4"/><path d="M14.500 5H5a3.800 3.800 0 0 0 0 7.600h1"/></svg>
    </div>
    <div class="isl" style="left:1053px;top:926px;width:45px;height:45px">
      <svg class="abs" style="left:13px;top:14px" width="18" height="18" viewBox="0 0 18 18" fill="none" stroke="#e3e3e8" stroke-width="1.300" stroke-linecap="round"><circle cx="9" cy="9" r="7.600"/><path d="M7 7.200a2 2 0 1 1 2.800 1.900c-.500.300-.800.700-.800 1.300"/><circle cx="9" cy="12.700" r=".5" fill="#e3e3e8"/></svg>
    </div>
  </div>
</div>
<div id="edborder"></div>
<div id="rp">
  <!-- header -->
  <div class="abs" style="left:10px;top:10px;width:263px;height:40px;border:1px solid #4a4a4a;border-radius:7px"></div>
  <svg class="abs" style="left:21px;top:23px" width="21" height="14" viewBox="0 0 21 14" fill="#fff"><path d="M5.600 0h3.100l5.600 14h-3.100l-1.150-3H4.250l-1.150 3H0zM7.150 3.600 5.250 8.500h3.800zM11.700 0h3.100L20.400 14h-3.100z"/></svg>
  <div class="t" id="hd1" style="left:47px;top:20.500px;font-size:17px;color:#f2f2f2;letter-spacing:.3px;line-height:20px">Working with project files</div>
  <svg class="abs" style="left:247px;top:26px" width="12" height="8" viewBox="0 0 12 8" fill="none" stroke="#e0e0e0" stroke-width="1.800"><path d="M1.500 1.500 6 6l4.500-4.500"/></svg>
  <div class="abs" style="left:337px;top:10px;width:89px;height:40px;border-radius:7px;background:#4a9bf5"></div>
  <svg class="abs" style="left:355px;top:24px" width="12" height="12" viewBox="0 0 12 12"><path d="M0 6h12M6 0v12" stroke="#fff" stroke-width="1.700"/></svg>
  <div class="t" id="hd2" style="left:376px;top:20.500px;font-size:17px;color:#fff;letter-spacing:.3px;line-height:20px">New</div>
  <div class="abs" style="left:2px;top:60px;width:434px;height:1px;background:#444"></div>

  <!-- msg 1 -->
  <div class="abs" style="left:15px;top:74px;width:35px;height:35px;border-radius:50%;background:#2c3e53"></div>
  <svg class="abs" style="left:21px;top:84px" width="22.500" height="15" viewBox="0 0 21 14" preserveAspectRatio="none" fill="#4a9eff"><path d="M5.600 0h3.100l5.600 14h-3.100l-1.150-3H4.250l-1.150 3H0zM7.150 3.600 5.250 8.500h3.800zM11.700 0h3.100L20.400 14h-3.100z"/></svg>
  <div class="t" id="n1" style="left:60px;top:82px;font-size:17.5px;font-weight:400;-webkit-text-stroke:.55px #f2f2f2;color:#f2f2f2;letter-spacing:.05px;line-height:20px">Claude Agent</div>
  <div class="t" id="t1" style="left:181px;top:84px;font-size:15.5px;color:#777;letter-spacing:.1px;line-height:17px">1:03:31 PM</div>

  <div class="msgtx" id="a1" style="top:131px">I've added a</div>
  <div class="abs code" style="left:154px;top:128px;width:89px;height:31px"></div>
  <div class="t code" id="c1" style="left:164px;top:135px;font-size:16.200px;line-height:18px;background:none">Session</div>
  <div class="msgtx" id="a1b" style="left:248px;top:131px">model to the</div>
  <div class="msgtx" id="a2" style="top:164px">schema with fields for token, expiry, IP</div>
  <div class="msgtx" id="a3" style="top:195px">address, and user agent. It has a foreign</div>
  <div class="msgtx" id="a4" style="top:225px">key relationship to the</div>
  <div class="abs code" style="left:239px;top:222px;width:59px;height:32px"></div>
  <div class="t code" id="c2" style="left:249px;top:229px;font-size:16.200px;line-height:18px;background:none">User</div>
  <div class="msgtx" id="a4b" style="left:303px;top:225px">model with</div>
  <div class="msgtx" id="a5" style="top:259px">cascade delete.</div>
  <div class="t" id="f1" style="left:45px;top:307px;font-size:15.5px;color:#6e6e6e;letter-spacing:.2px;line-height:17px">Finished in 4ms</div>

  <!-- user msg -->
  <div class="abs" style="left:2px;top:351px;width:440px;height:183px;border-radius:7px;background:#1a1a1a"></div>
  <div class="abs" style="left:15px;top:366px;width:35px;height:35px;border-radius:50%;background:#1b4333"></div>
  <svg class="abs" style="left:24px;top:374px" width="17" height="18" viewBox="0 0 17 18" fill="none" stroke="#2fd686" stroke-width="1.700" stroke-linejoin="round"><circle cx="8.500" cy="5" r="2.900"/><path d="M1.500 15.500c.6-3.300 3.400-4.700 7-4.700s6.400 1.400 7 4.700z"/></svg>
  <div class="t" id="n2" style="left:60px;top:374px;font-size:17.5px;font-weight:400;-webkit-text-stroke:.55px #f2f2f2;color:#f2f2f2;letter-spacing:.05px;line-height:20px">You</div>
  <div class="t" id="t2" style="left:101px;top:376px;font-size:15.5px;color:#777;letter-spacing:.1px;line-height:17px">1:03:44 PM</div>
  <div class="msgtx" id="u1" style="top:423px">Create a user onboarding journey diagram</div>
  <div class="msgtx" id="u2" style="top:453px">showing the steps from landing page to</div>
  <div class="msgtx" id="u3" style="top:483px">first action</div>

  <!-- msg 3 -->
  <div class="abs" style="left:15px;top:562px;width:35px;height:35px;border-radius:50%;background:#2c3e53"></div>
  <svg class="abs" style="left:21px;top:572px" width="22.500" height="15" viewBox="0 0 21 14" preserveAspectRatio="none" fill="#4a9eff"><path d="M5.600 0h3.100l5.600 14h-3.100l-1.150-3H4.250l-1.150 3H0zM7.150 3.600 5.250 8.500h3.800zM11.700 0h3.100L20.400 14h-3.100z"/></svg>
  <div class="t" id="n3" style="left:60px;top:570px;font-size:17.5px;font-weight:400;-webkit-text-stroke:.55px #f2f2f2;color:#f2f2f2;letter-spacing:.05px;line-height:20px">Claude Agent</div>
  <div class="t" id="t3" style="left:181px;top:572px;font-size:15.5px;color:#777;letter-spacing:.1px;line-height:17px">1:03:44 PM</div>
  <svg class="abs" style="left:397px;top:567px;color:#777" width="20" height="18" viewBox="0 0 20 18" fill="none" stroke="currentColor" stroke-width="1.600" stroke-linecap="round"><path d="M1.500 9C3.500 5.200 6.500 3.300 10 3.300S16.500 5.200 18.500 9c-2 3.800-5 5.700-8.500 5.700S3.500 12.800 1.500 9z"/><circle cx="10" cy="9" r="2.600"/><path d="M3 1.500l14 15"/></svg>
  <div class="msgtx" id="b1" style="top:621px">I've created</div>
  <div class="abs code" style="left:45px;top:648px;width:294px;height:32px"></div>
  <div class="t code" id="c3" style="left:55px;top:655px;font-size:16.200px;line-height:18px;background:none">docs/architecture.excalidraw</div>
  <div class="msgtx" id="b2" style="left:344px;top:651px">with a</div>
  <div class="msgtx" id="b3" style="top:685px">user onboarding journey flow: Landing Page</div>
  <div class="msgtx" id="b4" style="top:715px">→ Sign Up → Onboarding → Dashboard →</div>
  <div class="msgtx" id="b5" style="top:746px">First Action, with stage labels (Awareness,</div>
  <div class="msgtx" id="b6" style="top:776px">Acquisition, Activation, Engagement,</div>
  <div class="msgtx" id="b7" style="top:807px">Retention).</div>
  <div class="t" id="f2" style="left:45px;top:855px;font-size:15.5px;color:#6e6e6e;letter-spacing:.2px;line-height:17px">Finished in 5ms</div>

  <!-- pending bar -->
  <div class="abs" style="left:2px;top:904px;width:434px;height:54px;background:#3c3328;border-bottom:1px solid #6b5227"></div>
  <svg class="abs" style="left:15px;top:921px" width="19" height="18" viewBox="0 0 19 18" fill="none" stroke="#f5b13d" stroke-width="1.600" stroke-linejoin="round"><path d="M1.500 1.500h16v11.500h-12l-4 3.500z"/><path d="M5 10l1-2.500 4.500-4 1.500 1.500-4.500 4zM11.500 10h3" stroke-width="1.300"/></svg>
  <div class="t" id="p1" style="left:45px;top:922px;font-size:15.500px;font-weight:400;-webkit-text-stroke:.5px #f5b13d;color:#f5b13d;letter-spacing:.1px;line-height:17px">1 file pending review</div>
  <div class="abs" style="left:317px;top:914px;width:104px;height:33px;border:1px solid #f5b13d;border-radius:5px"></div>
  <svg class="abs" style="left:331px;top:923px" width="15" height="15" viewBox="0 0 15 15" fill="none" stroke="#f5b13d" stroke-width="1.500" stroke-linecap="round" stroke-linejoin="round"><circle cx="7.500" cy="7.500" r="6.500"/><path d="M4.600 7.800l2 2 3.800-4"/></svg>
  <div class="t" id="p2" style="left:353px;top:922px;font-size:15px;font-weight:400;-webkit-text-stroke:.5px #f5b13d;color:#f5b13d;letter-spacing:.1px;line-height:17px">Keep All</div>

  <!-- input area -->
  <div class="abs" style="left:2px;top:958px;width:434px;height:122px;background:#1a1a1a"></div>
  <div class="abs" style="left:15px;top:968px;width:74px;height:26px;border-radius:13px;background:#48241a"></div>
  <div class="t" id="ag" style="left:27px;top:973px;font-size:14.500px;font-weight:400;-webkit-text-stroke:.55px #ff8c42;color:#ff8c42;letter-spacing:.7px;line-height:16px">AGENT</div>
  <div class="abs" style="left:99px;top:966px;width:250px;height:30px;border:1px solid #454545;border-radius:15px"></div>
  <div class="t" id="md" style="left:110px;top:973px;font-size:15.200px;color:#d2d2d2;letter-spacing:.55px;line-height:16px">claude-sonnet-4-5-20250929</div>
  <svg class="abs" style="left:324px;top:977px" width="10" height="7" viewBox="0 0 10 7" fill="none" stroke="#c8c8c8" stroke-width="1.600"><path d="M1 1l4 4 4-4"/></svg>
  <div class="abs" style="left:386px;top:967px;width:35px;height:28px;border:1px solid #454545;border-radius:6px"></div>
  <div class="t" style="left:386px;width:35px;text-align:center;top:972px;font-size:14px;font-weight:700;color:#a0a0a0;letter-spacing:.5px;line-height:16px">--</div>
  <div class="abs" style="left:15px;top:1004px;width:351px;height:69px;border:1px solid #4a9eff;border-radius:7px;background:#292929"></div>
  <div class="t" id="ph1" style="left:31px;top:1019px;font-size:16.900px;color:#6e6e6e;letter-spacing:.35px;line-height:18px">Ask a question. @ for files. / for</div>
  <div class="t" id="ph2" style="left:31px;top:1043px;font-size:16.900px;color:#6e6e6e;letter-spacing:.35px;line-height:18px">commands</div>
  <div class="abs" style="left:376px;top:1004px;width:45px;height:45px;border-radius:7px;background:#2b4a72"></div>
  <svg class="abs" style="left:390px;top:1017px" width="18" height="18" viewBox="0 0 18 18" fill="none" stroke="#6d8cb6" stroke-width="1.500" stroke-linejoin="round"><path d="M1.500 8.300 16.500 1.500 11 16.500 8.500 9.800z"/></svg>
</div>
</body>
</html>
